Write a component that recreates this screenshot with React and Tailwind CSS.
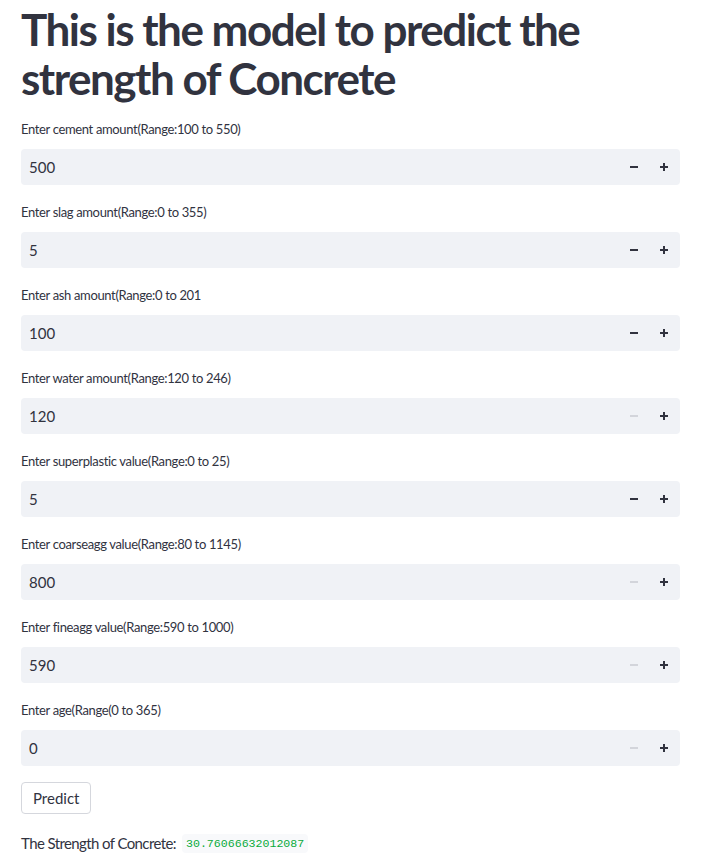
import React, { useState } from 'react';

const fields = [
  { label: 'Enter cement amount(Range:100 to 550)', value: 500, min: 100 },
  { label: 'Enter slag amount(Range:0 to 355)', value: 5, min: 0 },
  { label: 'Enter ash amount(Range:0 to 201', value: 100, min: 0 },
  { label: 'Enter water amount(Range:120 to 246)', value: 120, min: 120 },
  { label: 'Enter superplastic value(Range:0 to 25)', value: 5, min: 0 },
  { label: 'Enter coarseagg value(Range:80 to 1145)', value: 800, min: 800 },
  { label: 'Enter fineagg value(Range:590 to 1000)', value: 590, min: 590 },
  { label: 'Enter age(Range(0 to 365)', value: 0, min: 0 },
];

function Minus({ disabled }) {
  return (
    <svg width="10" height="10" viewBox="0 0 10 10">
      <line x1="1" y1="5" x2="9" y2="5" stroke={disabled ? '#d3d5db' : '#31333f'} strokeWidth="2" />
    </svg>
  );
}

function Plus() {
  return (
    <svg width="10" height="10" viewBox="0 0 10 10">
      <line x1="1" y1="5" x2="9" y2="5" stroke="#31333f" strokeWidth="2" />
      <line x1="5" y1="1" x2="5" y2="9" stroke="#31333f" strokeWidth="2" />
    </svg>
  );
}

function NumberInput({ label, value, min }) {
  const disabled = value <= min;
  return (
    <div className="flex flex-col">
      <label className="h-5 flex items-center text-[13px] tracking-[-0.35px] text-[#31333f]">{label}</label>
      <div className="mt-[9px] h-9 w-[659px] rounded bg-[#f0f2f6] flex items-center pl-2 pr-[1px]">
        <span className="flex-1 text-[15px] text-[#31333f]">{value}</span>
        <button className="w-[30px] h-9 flex items-center justify-center">
          <Minus disabled={disabled} />
        </button>
        <button className="w-[30px] h-9 flex items-center justify-center">
          <Plus />
        </button>
      </div>
    </div>
  );
}

export default function App() {
  const [result] = useState('30.76066632012087');

  return (
    <div className="min-h-screen bg-white px-[21px] pt-[5px] font-['Lato','Open_Sans',sans-serif] text-[#31333f]">
      <h1 className="text-[44px] leading-[49px] font-bold tracking-[-1.5px] text-[#31333f]">
        This is the model to predict the strength of Concrete
      </h1>
      <div className="mt-[17px] flex flex-col gap-[18px]">
        {fields.map((f) => (
          <NumberInput key={f.label} {...f} />
        ))}
      </div>
      <button className="mt-4 h-8 px-[11px] rounded border border-[#d5d7dd] bg-white text-[15px] text-[#31333f]">
        Predict
      </button>
      <div className="mt-[18px] flex items-center text-[15px] tracking-[-0.6px]">
        <span>The Strength of Concrete:</span>
        <code className="ml-[6px] px-1 py-[1px] rounded bg-[#f8f9fb] text-[11.6px] tracking-normal text-[#09ab3b] font-['Liberation_Mono',monospace]">
          {result}
        </code>
      </div>
    </div>
  );
}
